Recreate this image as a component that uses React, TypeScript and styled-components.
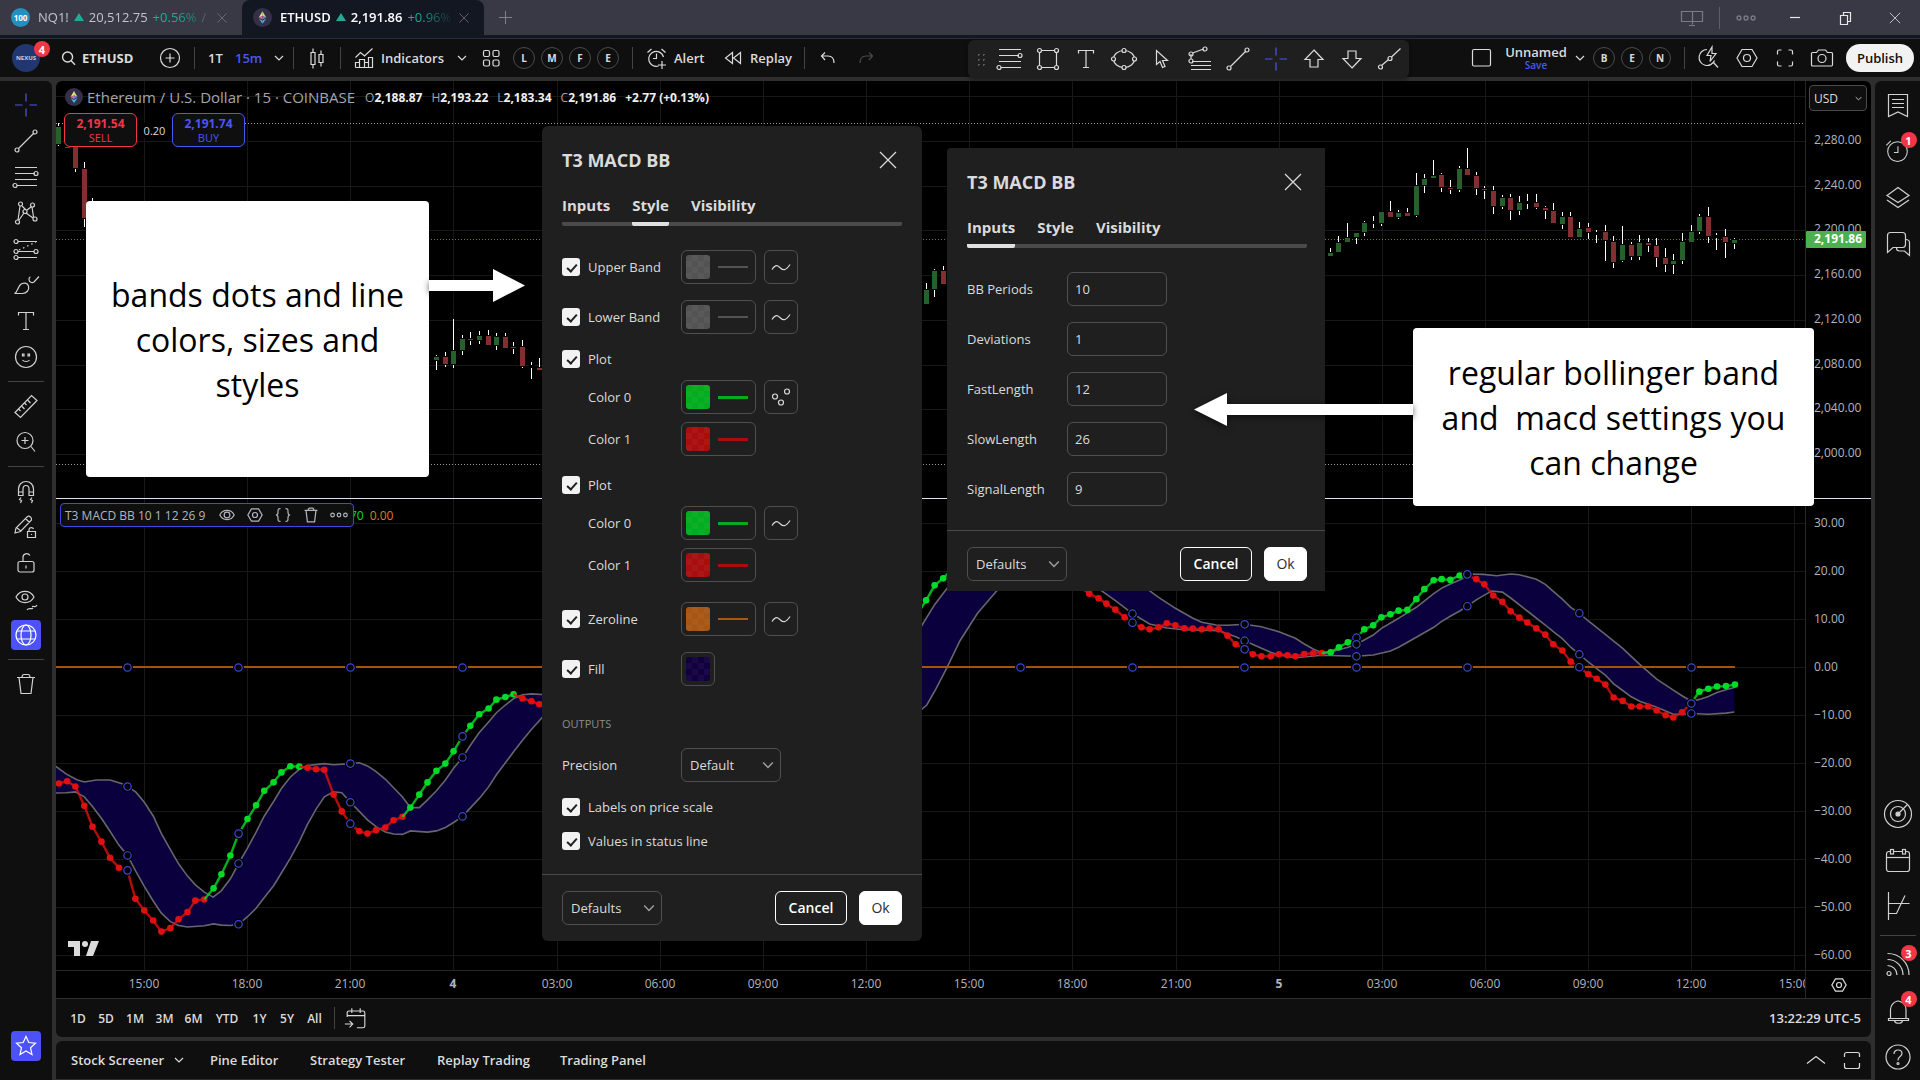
import React from "react";
import styled, { createGlobalStyle, css } from "styled-components";

const Global = createGlobalStyle`
  * { box-sizing: border-box; }
  html, body { margin: 0; padding: 0; background: #2e2e2e; }
  body, button, input, select { font-family: "Open Sans", "Noto Sans", sans-serif; }
  button { background: none; border: 0; padding: 0; margin: 0; color: inherit; cursor: pointer; }
  h2, h3, p { margin: 0; }
`;

/* ---------- icons ---------- */

const ring = (x: number, y: number, r = 2) => <circle key={`${x}-${y}`} cx={x} cy={y} r={r} />;

const ICONS: Record<string, React.ReactNode> = {
  cross: <path d="M14 2.5v8M14 17.5v8M3 14h7.5M17.5 14H25" />,
  trend: <><path d="M6.5 21.5l15-15" />{ring(5, 23)}{ring(23, 5)}</>,
  fib: <><path d="M3 4.5h22M3 10.5h20M3 16.5h22M5 22.5h20" />{ring(24, 10.5)}{ring(3, 22.5)}</>,
  pattern: <><path d="M8 7L6 21M10 7l4 4M20 8l1.5 10M7 21l5-7M14 14l7 5M19 8l-4 3" />{ring(8.5, 5)}{ring(20.5, 6)}{ring(5.5, 23)}{ring(23, 20)}{ring(13, 12.5)}</>,
  forecast: <><path d="M6 6.5h19M6 16.5h16M6 22.5h19" /><path d="M7 15l17-8" strokeDasharray="1.5 3" />{ring(4, 6.5)}{ring(4, 16.5)}{ring(24, 16.5)}{ring(4, 22.5)}</>,
  brush: <><path d="M2.5 22.5c3-1 3-6 6-9 3-2.5 7-1.5 8 1.5 1 4-2 7.5-6 7.5z" /><path d="M27 5.5l-5 5.5c-2 1.5-5 0-5-2.5 0-1.5.5-2.5 1.5-2.5" /></>,
  text: <path d="M6.5 8.5v-3h15v3M14 5.5v17.5M11 22.5h6" />,
  emoji: <><circle cx="14" cy="14" r="10.5" /><path d="M10.5 11h1.5v2h-1.5zM16 11h1.5v2H16z" /><path d="M10.5 17c1.5 2 5.5 2 7 0" /></>,
  ruler: <><path d="M3 20.5L19.5 3.5l5.5 5L8.5 25.5z" /><path d="M6.5 17l2 2M9.5 14l3 3M12.5 11l2 2M15.5 8l3 3" /></>,
  zoom: <><circle cx="13" cy="12.5" r="8" /><path d="M19 18.5l4 5M13 9v7M9.5 12.5h7" /></>,
  magnet: <><path d="M6.5 18.5V12c0-4 3-7.5 7.5-7.5s7.5 3.5 7.5 7.5v6.5h-4.5V12c0-2-1-3.5-3-3.5S11 10 11 12v6.5zM6.5 15H11M17 15h4.5" /><path d="M9 20.5l-1.5 2 2 1-1 2.5M20 20.5l-1.5 2 2 1-1 2.5" /></>,
  pencilLock: <><path d="M3 20l1-5L15.5 3.5c2-1 4.5 1 4 3.5L8.5 18.5zM13.5 5.5l4 4M5 15l4 3" /><path d="M15.5 18.5h8v6h-8zM17 18.5v-2c0-2.5 4-2.5 4.5-.5M19.5 21v1" /></>,
  lock: <><rect x="6" y="12.5" width="16" height="10.5" rx="2" /><path d="M11 12.5V8c0-3.5 5-4.5 7-1.5M14 16.5v3" /></>,
  eyeWave: <><path d="M4 12c4-7.5 14-7.5 18 0-4 7.5-14 7.5-18 0z" /><circle cx="13" cy="12" r="3" /><path d="M15 25c2-3 4 0 6-2M20 21.5c2-1 3 2 5-1.5" /></>,
  globe: <><circle cx="14" cy="14" r="10" /><ellipse cx="14" cy="14" rx="5" ry="10" /><path d="M5 10h18M5 18h18" /></>,
  trash: <path d="M5 7.5h18M10 7.5c0-2.5 1-3 2-3h4c1 0 2 .5 2 3M7 7.5l2 16h10l2-16" />,
  trashBold: <path d="M5 7.5h18M10 7.5c0-2.5 1-3 2-3h4c1 0 2 .5 2 3M7 7.5l2 16h10l2-16" strokeWidth="1.7" />,
  star: <path d="M14 4.5l2.8 6 6.7.7-5 4.5 1.5 6.8-6-3.5-6 3.5 1.5-6.8-5-4.5 6.7-.7z" />,
  watch: <><path d="M4.5 2.5h19v22l-9.5-4.5-9.5 4.5z" /><path d="M8 7.5h12M8 11.5h12M8 15.5h12" /></>,
  alarm: <><circle cx="14" cy="13" r="11" /><path d="M14.5 7v7h-4.5M1.5 6l5-5" /></>,
  layers: <><path d="M3 11.5l11-8 11 8-11 7z" /><path d="M3 16l11 7.5 11-7.5" /></>,
  chat: <><path d="M3.5 22.5V5.500c0-1.5 1-3 3-3h12c2 0 3 1 3 3v9c0 2-1 3-3 3H9z" /><path d="M21.5 9.5c2 0 4 1 4 3v13l-5-4.5h-5c-2 0-3-1-3-3" /></>,
  radar: <><circle cx="14" cy="14" r="13.5" /><circle cx="14" cy="14" r="7.5" /><circle cx="14" cy="14" r="2" fill="currentColor" /><path d="M14 14l9-9" /></>,
  calendar: <><rect x="2.5" y="5.5" width="23" height="20" rx="2.5" /><path d="M2.5 11.5h23" /><rect x="6.5" y="3.5" width="3" height="4.5" fill="#0f0f0f" /><rect x="18.5" y="3.5" width="3" height="4.5" fill="#0f0f0f" /></>,
  dom: <path d="M4.5 0v28M4.5 21.5h8L21 3.5M4.5 11.5h21" />,
  rss: <><path d="M3.5 2.5c12 0 21.5 9 21.5 21.5M3.5 8.5c9 0 15.5 7 15.5 15.500M3.5 14.5c5 0 9.5 4 9.5 9.5" />{ring(5, 22.5)}</>,
  bell: <><path d="M6.5 21.5v-9c0-4 3-7.5 7-8.5h1c4 1 7.5 4 7.5 8.5v9M4.5 21.5h20v2h-20zM10.5 24c1 3 7 3 8 0" /></>,
  help: <><circle cx="14" cy="14" r="12" /><path d="M10 11c0-5.5 8-5 8-.5 0 3-4 3-4 6.500v.5" /><circle cx="14" cy="20.5" r="1" /></>,
  search: <><circle cx="12" cy="12.5" r="7" strokeWidth="2" /><path d="M17 18l5.5 5.5" strokeWidth="2" /></>,
  plus: <><circle cx="14" cy="14" r="9.5" /><path d="M14 9.5v9M9.5 14h9" /></>,
  candles: <path d="M8 8.5h4v12H8zM10 4.5v4M10 20.5v4M16 10.5h4v8h-4zM18 6.5v4M18 18.5v4" />,
  indicators: <path d="M5.5 13.5l5-5 4 3.5 8-7.5M5.5 23.5v-5h4v5M9.5 23.5v-8h5v8M14.5 23.5v-5h4v5M18.5 23.5v-10h4v10zM5.5 23.5h17" />,
  grid: <><rect x="6.5" y="6.5" width="6" height="6" rx="1.5" /><rect x="16" y="6.5" width="6" height="6" rx="1.5" /><rect x="6.5" y="16" width="6" height="6" rx="1.5" /><rect x="16" y="16" width="6" height="6" rx="1.5" /></>,
  alert: <><path d="M20.5 13a7.5 7.5 0 1 0-5 9M13.5 9.5v5H10M4.5 8.5l4-3.5M18.5 5l4 3.5M19 17v8M15 21h8" /></>,
  replay: <path d="M13.5 8.5v11L6.5 14zM21.5 8.5v11L14.5 14z" />,
  undo: <path d="M11 8.5l-3.5 3.5 3.5 4M8 12h6c4 0 6 2.5 6 7" />,
  redo: <path d="M17 8.5l3.5 3.5-3.5 4M20 12h-6c-4 0-6 2.5-6 7" />,
  square: <rect x="5.5" y="5.5" width="18" height="16.5" rx="1.5" />,
  quick: <><path d="M12 5.5a8 8 0 1 0 7.5 11M18.5 18.5l4.5 5" /><path d="M17 3l-5 8.5h4l-1 6 6-8h-4z" /></>,
  hex: <><path d="M9 5.5h10l5 8.5-5 8.5H9L4 14z" /><circle cx="14" cy="14" r="3.5" /></>,
  full: <path d="M6.5 10.5v-3c0-1 .5-1.5 1.5-1.5h2.5M17.5 6H20c1 0 1.5.5 1.5 1.5v3M21.5 17.5v3c0 1-.5 1.5-1.5 1.5h-2.5M10.5 22H8c-1 0-1.5-.5-1.5-1.5v-3" />,
  camera: <><path d="M4.5 8.5h4l2-2.500h7l2 2.5h4c.8 0 1 .3 1 1v11c0 1-.2 1.5-1 1.5h-19c-.8 0-1-.5-1-1.5v-11c0-.7.2-1 1-1z" /><circle cx="14" cy="14.5" r="4" /></>,
  rect: <><path d="M8 5.5h12M8 22.5h12M5.5 8v12M22.5 8v12" />{ring(5.5, 5.5)}{ring(22.5, 5.5)}{ring(5.5, 22.5)}{ring(22.5, 22.5)}</>,
  ellipse: <><ellipse cx="14" cy="14" rx="10.5" ry="8.5" />{[[14, 5.5], [14, 22.5], [3.5, 14], [24.5, 14]].map(([x, y]) => <circle key={`${x}${y}`} cx={x} cy={y} r="2" fill="#1f1f1f" />)}</>,
  cursor: <path d="M8.5 5.5v14l3.5-3 2.5 6 2.5-1-2.5-6h5z" />,
  fork: <><path d="M5 14v-5M6.5 8l11-4M6 16.5h19M5 20.5h20M5 24.5h20" />{ring(5, 9)}{ring(19, 4)}{ring(5, 16)}</>,
  up: <path d="M14 5l9 9.5h-5V22h-8v-7.5H5z" />,
  down: <path d="M14 23l9-9.5h-5V6h-8v7.5H5z" />,
  ray: <><path d="M5.5 20.5L12 15M15.500 12l9-8.5" />{ring(4.5, 22)}{ring(14, 13.5)}</>,
  wave: <path d="M5 16.5c4-6 6-4 8.5-1.5s5 3 9.5-3.5" />,
  dots: <>{ring(8, 13.5, 2.5)}{ring(20, 8.5, 2.5)}{ring(14, 19.5, 2.5)}</>,
  close: <path d="M6 6l16 16M22 6L6 22" />,
  eye: <><path d="M4 14c4-8.5 16-8.5 20 0-4 8.5-16 8.5-20 0z" strokeWidth="1.7" /><circle cx="14" cy="14" r="4" strokeWidth="1.7" /></>,
  hexSmall: <><path d="M9 5.5h10l5 8.5-5 8.5H9L4 14z" strokeWidth="1.7" /><circle cx="14" cy="14" r="3.5" strokeWidth="1.7" /></>,
  braces: <path d="M10.5 5c-3.5 0-3.5 1-3.5 5 0 3-1 4-3 4 2 0 3 1 3 4 0 4 0 5 3.5 5M17.5 5c3.5 0 3.5 1 3.5 5 0 3 1 4 3 4-2 0-3 1-3 4 0 4 0 5-3.5 5" strokeWidth="1.7" />,
  more: <g strokeWidth="1.7">{ring(5, 14, 2.5)}{ring(14, 14, 2.5)}{ring(23, 14, 2.5)}</g>,
  goTo: <path d="M4.5 13V8.5c0-1 .5-2 2-2h15c1.5 0 2 1 2 2v14c0 1-.5 2-2 2H15M9.5 3.5v5M18.5 3.5v5M4.5 11.5h19M2 20.5h8M7 17l3.5 3.5L7 24" />,
  chevUp: <path d="M5 17.5l9-7 9 7" />,
  panel: <path d="M6.5 11V8.5c0-1 1-2 2-2h11c1 0 2 1 2 2V11M6.5 17v3.5c0 1 1 2 2 2h11c1 0 2-1 2-2V17" />,
  screens: <path d="M3.5 7.5h21v10h-21zM14.5 7.5v13M11 21.5h6" />,
  restore: <path d="M9.5 11.5h7v9h-7zM12.5 11V8.5h7v9H17" />,
  min: <path d="M9 13.5h10" />,
};

const Svg = styled.svg`display: block; flex: none;`;

const Icon = ({ n, size = 28 }: { n: string; size?: number }) => (
  <Svg width={size} height={size} viewBox="0 0 28 28" fill="none" stroke="currentColor" strokeWidth="1.2" aria-hidden overflow="visible">
    {ICONS[n]}
  </Svg>
);

const Chevron = ({ size = 10 }: { size?: number }) => (
  <Svg width={size} height={size} viewBox="0 0 10 10" fill="none" stroke="currentColor" strokeWidth="1.2" aria-hidden>
    <path d="M1 3l4 4 4-4" />
  </Svg>
);

const EthLogo = ({ size = 18 }: { size?: number }) => (
  <Svg width={size} height={size} viewBox="0 0 18 18" aria-hidden>
    <circle cx="9" cy="9" r="9" fill="#343047" />
    <path d="M9 3L5.5 9 9 7.5z" fill="#f3e06a" />
    <path d="M9 3l3.5 6L9 7.5z" fill="#b8e08a" />
    <path d="M9 7.5L5.5 9 9 11z" fill="#e8658c" />
    <path d="M9 7.5L12.5 9 9 11z" fill="#7a6fe0" />
    <path d="M5.500 10L9 12v3z" fill="#5aa8f1" />
    <path d="M12.5 10L9 12v3z" fill="#39c8e0" />
  </Svg>
);

/* ---------- frame ---------- */

const Page = styled.div`
  position: relative;
  min-height: 100vh;
  display: flex;
  flex-direction: column;
  overflow: hidden;
  background: #2e2e2e;
  color: #dbdbdb;
  font-size: 13px;
`;

const Titlebar = styled.header`
  display: flex;
  align-items: stretch;
  height: 39px;
  background: #383945;
  border-bottom: 1px solid #2a2e39;
  box-shadow: inset 0 -3px #131722;
`;

const Tab = styled.div<{ $active?: boolean }>`
  display: flex;
  align-items: center;
  width: 242px;
  height: 35px;
  padding: 0 12px 0 11px;
  white-space: nowrap;
  color: ${(p) => (p.$active ? "#fff" : "#c1c4cd")};
  font-weight: ${(p) => (p.$active ? 600 : 500)};
  background: ${(p) => (p.$active ? "#131722" : "transparent")};
  border-radius: 8px 8px 0 0;
  > button { margin-left: auto; color: #7d7f8a; }
`;

const Coin = styled.span`
  display: grid;
  place-items: center;
  flex: none;
  width: 19px;
  height: 19px;
  border-radius: 50%;
  background: #2390c0;
  color: #fff;
  font-size: 8px;
  font-weight: 700;
`;

const Quote = styled.div`
  display: flex;
  align-items: center;
  gap: 5px;
  width: 172px;
  height: 34px;
  padding-bottom: 1px;
  margin-left: 8px;
  overflow: hidden;
  mask-image: linear-gradient(90deg, #000 80%, transparent 102%);
`;

const Up = styled.span`
  color: #22ab94;
  font-weight: 500;
`;

const Triangle = styled.i`
  border: 5px solid transparent;
  border-top: 0;
  border-bottom: 8px solid #22ab94;
`;

const NewTab = styled.button`
  width: 42px;
  height: 35px;
  display: grid;
  place-items: center;
  color: #7d7f8a;
`;

const WindowButtons = styled.div`
  display: flex;
  align-items: center;
  height: 36px;
  margin-left: auto;
  color: #dbdbdb;
`;

const WinButton = styled.button<{ $w: number; $mr?: number; $dim?: boolean }>`
  display: grid;
  place-items: center;
  width: ${(p) => p.$w}px;
  height: 28px;
  margin-right: ${(p) => p.$mr ?? 0}px;
  color: ${(p) => (p.$dim ? "#787a85" : "#e8e8ea")};
`;

const Divider = styled.i<{ $ml?: number; $mr?: number; $c?: string }>`
  flex: none;
  width: 1px;
  height: 22px;
  margin: 0 ${(p) => p.$mr ?? 0}px 0 ${(p) => p.$ml ?? 0}px;
  background: ${(p) => p.$c ?? "#434343"};
`;

const Toolbar = styled.div`
  display: flex;
  align-items: center;
  height: 38px;
  padding: 0 6px 0 12px;
  background: #0f0f0f;
`;

const Tool = styled.button<{ $w: number; $ml?: number; $blue?: boolean; $dim?: boolean; $bold?: boolean }>`
  display: flex;
  align-items: center;
  flex: none;
  gap: 3px;
  width: ${(p) => p.$w}px;
  height: 32px;
  margin-left: ${(p) => p.$ml ?? 0}px;
  white-space: nowrap;
  font-size: 13px;
  font-weight: ${(p) => (p.$bold ? 700 : 600)};
  color: ${(p) => (p.$blue ? "#4c55f5" : p.$dim ? "#4a4a4a" : "#dbdbdb")};
`;

const Avatar = styled.button`
  position: relative;
  width: 28px;
  height: 28px;
  border-radius: 50%;
  background: #22376f;
  color: #c9cfdd;
  font-size: 6px;
  font-weight: 700;
`;

const Badge = styled.span<{ $top: number; $right: number }>`
  position: absolute;
  top: ${(p) => p.$top}px;
  right: ${(p) => p.$right}px;
  display: grid;
  place-items: center;
  width: 16px;
  height: 16px;
  border-radius: 8px;
  background: #f23645;
  color: #fff;
  font-size: 11px;
  font-weight: 700;
`;

const Letter = styled.button<{ $ml?: number }>`
  flex: none;
  width: 22px;
  height: 22px;
  margin-left: ${(p) => p.$ml ?? 6}px;
  border: 1px solid #4a4a4a;
  border-radius: 50%;
  font-size: 10px;
  font-weight: 700;
`;

const RightTools = styled.div`
  display: flex;
  align-items: center;
  margin-left: auto;
`;

const LayoutName = styled.button`
  display: flex;
  flex-direction: column;
  align-items: center;
  width: 60px;
  margin: 0 9px 0 11px;
  font-size: 13px;
  font-weight: 600;
  line-height: 15px;
  small { font-size: 10px; line-height: 11px; color: #4c55f5; }
`;

const Publish = styled.button`
  width: 68px;
  height: 28px;
  margin-left: 10px;
  border-radius: 14px;
  background: #f2f2f2;
  color: #0f0f0f;
  font-size: 13px;
  font-weight: 600;
`;

const FloatingBar = styled.div`
  position: absolute;
  top: 40px;
  left: 968px;
  z-index: 3;
  display: flex;
  align-items: center;
  gap: 10px;
  width: 441px;
  height: 38px;
  padding-left: 8px;
  border-radius: 6px;
  background: #1f1f1f;
  box-shadow: 0 2px 4px rgba(0, 0, 0, 0.4);
`;

const Grip = styled.span`
  width: 10px;
  height: 15px;
  background: radial-gradient(circle, #5c5c5c 1px, transparent 1px) 0 0 / 5px 5px;
`;

const FloatButton = styled.button<{ $blue?: boolean }>`
  color: ${(p) => (p.$blue ? "#4c55f5" : "#dbdbdb")};
`;

const Body = styled.div`
  flex: 1;
  display: flex;
  gap: 4px;
  padding-top: 4px;
`;

const Side = styled.nav<{ $right?: boolean }>`
  display: flex;
  flex-direction: column;
  align-items: center;
  width: ${(p) => (p.$right ? 45 : 52)}px;
  padding: ${(p) => (p.$right ? "2px 0 0" : "6px 0 16px")};
  border-radius: ${(p) => (p.$right ? "6px 0 0 0" : "0 6px 0 0")};
  background: #0f0f0f;
`;

const SideButton = styled.button<{ $h: number; $blue?: boolean }>`
  position: relative;
  display: grid;
  place-items: center;
  width: 36px;
  height: ${(p) => p.$h}px;
  color: ${(p) => (p.$blue ? "#4c55f5" : "#d1d1d1")};
`;

const BlueButton = styled.button`
  display: grid;
  place-items: center;
  width: 30px;
  height: 30px;
  margin: 3px 0;
  border-radius: 4px;
  background: #4c52f7;
  color: #fff;
`;

const Rule = styled.i`
  width: 36px;
  height: 1px;
  margin: 6px 0;
  background: #434343;
`;

const Spacer = styled.span`flex: 1;`;

const Main = styled.main`
  flex: 1;
  min-width: 0;
  display: flex;
  flex-direction: column;
`;

const ChartFrame = styled.section`
  flex: 1;
  display: grid;
  grid-template-columns: 1fr 66px;
  grid-template-rows: 1fr 28px;
  border-radius: 6px 6px 0 0;
  overflow: hidden;
  background: #000;
`;

const Plot = styled.div`
  position: relative;
  overflow: hidden;
  > svg { position: absolute; inset: 0; }
`;

const PriceScale = styled.div`
  position: relative;
  padding: 4px 4px 0 3px;
  border-left: 1px solid #262626;
  > svg { position: absolute; left: 0; top: 0; }
`;

const TimeScale = styled.div`
  overflow: hidden;
  border-top: 1px solid #262626;
`;

const ScaleCorner = styled.button`
  display: grid;
  place-items: center;
  border-top: 1px solid #262626;
  border-left: 1px solid #262626;
`;

const Currency = styled.span`
  position: relative;
  z-index: 1;
  display: flex;
  align-items: center;
  height: 26px;
  select {
    appearance: none;
    width: 100%;
    height: 26px;
    padding: 0 4px;
    border: 1px solid #4a4a4a;
    border-radius: 4px;
    background: #0f0f0f;
    color: #dbdbdb;
    font-size: 12px;
    font-weight: 500;
  }
  svg { position: absolute; right: 5px; }
`;

const AxisText = styled.text<{ $strong?: boolean; $tag?: boolean }>`
  font-family: "Open Sans", "Noto Sans", sans-serif;
  font-size: 12px;
  fill: ${(p) => (p.$tag ? "#fff" : "#b2b5be")};
  font-weight: ${(p) => (p.$strong || p.$tag ? 700 : 500)};
`;

const Legend = styled.div`
  position: relative;
  display: flex;
  align-items: center;
  height: 24px;
  padding-left: 9px;
  margin-top: 4px;
  gap: 4px;
  color: #a3a6af;
`;

const SymbolName = styled.h2`
  margin-right: 6px;
  font-size: 15px;
  font-weight: 500;
  white-space: pre;
`;

const Ohlc = styled.span`
  margin-right: 5px;
  font-size: 12px;
  b { color: #f0f0f0; font-weight: 700; }
`;

const Orders = styled.div`
  position: relative;
  display: flex;
  align-items: center;
  height: 34px;
  margin-top: 4px;
  padding-left: 8px;
`;

const OrderButton = styled.button<{ $c: string }>`
  display: flex;
  flex-direction: column;
  align-items: center;
  justify-content: center;
  width: 73px;
  height: 34px;
  border: 1px solid ${(p) => p.$c};
  border-radius: 6px;
  background: #0f0f0f;
  color: ${(p) => p.$c};
  font-size: 12px;
  font-weight: 700;
  line-height: 14px;
  small { font-size: 11px; font-weight: 400; line-height: 13px; }
`;

const Spread = styled.span`
  width: 35px;
  text-align: center;
  font-size: 11px;
  font-weight: 500;
  background: #000;
`;

const StudyRow = styled.div`
  position: absolute;
  top: 422px;
  left: 4px;
  display: flex;
  align-items: center;
  height: 24px;
  font-size: 12px;
  font-weight: 500;
`;

const Study = styled.div`
  position: relative;
  z-index: 1;
  display: flex;
  align-items: center;
  gap: 8px;
  width: 294px;
  height: 24px;
  padding-left: 4px;
  border: 1px solid #4148e0;
  border-radius: 4px;
  background: #0f0f0f;
  color: #b2b5be;
  font-size: 12px;
  white-space: nowrap;
  > span { width: 144px; }
`;

const Value = styled.span<{ $c: string; $ml: number }>`
  margin-left: ${(p) => p.$ml}px;
  color: ${(p) => p.$c};
`;

const RangeBar = styled.div`
  display: flex;
  align-items: center;
  height: 39px;
  padding: 0 10px 0 8px;
  border-top: 1px solid #2e2e2e;
  border-radius: 0 0 6px 6px;
  background: #0f0f0f;
`;

const Range = styled.button<{ $w: number }>`
  width: ${(p) => p.$w}px;
  height: 28px;
  font-size: 12px;
  font-weight: 600;
`;

const Clock = styled.time`
  margin-left: auto;
  font-size: 13px;
  font-weight: 600;
`;

const BottomTabs = styled.div`
  display: flex;
  align-items: center;
  height: 38px;
  margin: 4px 0 1px;
  padding: 0 5px 0 15px;
  border-radius: 6px 6px 0 0;
  background: #0f0f0f;
`;

const BottomTab = styled.button<{ $w: number }>`
  display: flex;
  align-items: center;
  gap: 10px;
  width: ${(p) => p.$w}px;
  font-size: 13px;
  font-weight: 600;
  white-space: nowrap;
`;

/* ---------- dialogs ---------- */

const Dialog = styled.section<{ $x: number; $y: number; $w: number; $end: number; $foot: number; $r: string }>`
  position: absolute;
  z-index: 2;
  left: ${(p) => p.$x}px;
  top: ${(p) => p.$y}px;
  width: ${(p) => p.$w}px;
  border-radius: ${(p) => p.$r};
  background: #1f1f1f;
  --end: ${(p) => p.$end}px;
  --foot: ${(p) => p.$foot}px;
`;

const DialogHead = styled.div`
  display: flex;
  align-items: center;
  justify-content: space-between;
  height: 48px;
  padding: 20px var(--end) 0 20px;
  h3 { font-size: 18px; font-weight: 700; line-height: 28px; }
  button { display: grid; place-items: center; width: 28px; height: 28px; }
`;

const Tabs = styled.div`
  display: flex;
  gap: 22px;
  height: 32px;
  margin: 20px var(--end) 24px 20px;
  border-radius: 2px;
  background: linear-gradient(#4a4a4a, #4a4a4a) 0 100% / 100% 4px no-repeat;
`;

const DialogTab = styled.button<{ $on?: boolean }>`
  height: 32px;
  padding-bottom: 10px;
  font-size: 15px;
  font-weight: 700;
  line-height: 22px;
  ${(p) => p.$on && css`background: linear-gradient(#e0e0e0, #e0e0e0) 0 100% / 100% 4px no-repeat; border-radius: 2px;`}
`;

const Form = styled.div`
  padding: 0 20px 24px;
`;

const Row = styled.div<{ $gap?: number; $h?: number; $col?: number }>`
  display: grid;
  grid-template-columns: ${(p) => p.$col ?? 119}px auto auto;
  justify-content: start;
  align-items: center;
  height: ${(p) => p.$h ?? 34}px;
  margin-top: ${(p) => p.$gap ?? 0}px;
  font-size: 13px;
  font-weight: 500;
`;

const Check = styled.label`
  display: flex;
  align-items: center;
  gap: 8px;
  white-space: nowrap;
  input {
    appearance: none;
    position: relative;
    flex: none;
    width: 18px;
    height: 18px;
    margin: 0;
    border-radius: 3px;
    background: #f2f2f2;
  }
  input::after {
    content: "";
    position: absolute;
    left: 7px;
    top: 4px;
    width: 4px;
    height: 8px;
    border: solid #1f1f1f;
    border-width: 0 2px 2px 0;
    rotate: 42deg;
  }
`;

const Indented = styled.span`padding-left: 26px;`;

const ColorButton = styled.button<{ $w: number }>`
  display: flex;
  align-items: center;
  gap: 8px;
  width: ${(p) => p.$w}px;
  height: 34px;
  padding: 0 4px;
  border: 1px solid #4f4f4f;
  border-radius: 6px;
`;

const Swatch = styled.i<{ $c: string }>`
  width: 24px;
  height: 24px;
  border-radius: 3px;
  background: repeating-conic-gradient(rgba(255, 255, 255, 0.035) 0 25%, transparent 0 50%) 0 0 / 12px 12px, ${(p) => p.$c};
`;

const Stroke = styled.i<{ $c: string; $h: number }>`
  width: 30px;
  height: ${(p) => p.$h}px;
  background: ${(p) => p.$c};
`;

const StyleButton = styled.button`
  display: grid;
  place-items: center;
  width: 34px;
  height: 34px;
  margin-left: 8px;
  border: 1px solid #4f4f4f;
  border-radius: 6px;
`;

const Section = styled.p`
  margin-top: 30px;
  font-size: 11px;
  line-height: 16px;
  color: #8c8c8c;
`;

const Select = styled.span`
  position: relative;
  display: flex;
  align-items: center;
  width: 100px;
  select {
    appearance: none;
    width: 100px;
    height: 34px;
    padding: 0 8px;
    border: 1px solid #4f4f4f;
    border-radius: 6px;
    background: #1f1f1f;
    color: #dbdbdb;
    font-size: 13px;
    font-weight: 500;
  }
  svg { position: absolute; right: 7px; color: #a0a0a0; }
`;

const NumberBox = styled.input`
  width: 100px;
  height: 34px;
  padding: 0 7px;
  border: 1px solid #4f4f4f;
  border-radius: 6px;
  background: #1f1f1f;
  color: #dbdbdb;
  font-size: 13px;
  font-weight: 500;
`;

const Footer = styled.div`
  display: flex;
  align-items: center;
  gap: 12px;
  padding: 16px var(--end) var(--foot) 20px;
  border-top: 1px solid #4a4a4a;
`;

const Button = styled.button<{ $solid?: boolean }>`
  width: ${(p) => (p.$solid ? 43 : 72)}px;
  height: 34px;
  padding-bottom: 2px;
  border: 1px solid #fff;
  border-radius: 6px;
  background: ${(p) => (p.$solid ? "#fff" : "transparent")};
  color: ${(p) => (p.$solid ? "#2e2e2e" : "#fff")};
  font-size: 14px;
  font-weight: ${(p) => (p.$solid ? 400 : 600)};
`;

const Callout = styled.aside<{ $x: number; $y: number; $w: number; $h: number }>`
  position: absolute;
  z-index: 4;
  left: ${(p) => p.$x}px;
  top: ${(p) => p.$y}px;
  display: grid;
  place-items: center;
  width: ${(p) => p.$w}px;
  height: ${(p) => p.$h}px;
  border-radius: 4px;
  background: #fff;
  color: #000;
  text-align: center;
  font-size: 32px;
  line-height: 45px;
  p { white-space: pre; }
`;

const Arrow = styled.svg<{ $left?: boolean; $top: number }>`
  position: absolute;
  top: ${(p) => p.$top}px;
  ${(p) => (p.$left ? "right" : "left")}: 100%;
  filter: drop-shadow(0 2px 3px rgba(0, 0, 0, 0.6));
`;

/* ---------- chart data ---------- */

type Pt = [number, number];

const seg = (ox: number, oy: number, sx: number, sy: number, s: string): Pt[] =>
  s.split(" ").map((p) => {
    const [x, y] = p.split(",").map(Number);
    return [ox + x / sx, oy + y / sy];
  });

const A = (s: string) => seg(0, 480, 2.8, 2.613, s);
const B = (s: string) => seg(900, 480, 2.8, 3, s);
const C = (s: string) => seg(1400, 500, 3, 2.703, s);

const RED = "#e01010";
const GREEN = "#00dc28";

const runs: { c: string; pts: Pt[] }[] = [
  { c: RED, pts: A("140,797 165,793 188,787 211,801 236,851 259,906 284,945 308,987 333,1013 357,1020 379,1094 404,1125 429,1151 452,1180 477,1171 500,1148 525,1129 547,1099 572,1096") },
  { c: GREEN, pts: A("572,1096 598,1067 620,1030 645,981 668,924 693,886 717,850 740,812 766,790 788,764 813,748 838,749") },
  { c: RED, pts: A("838,749 861,752 885,756 908,757 934,822 957,866 981,898 1006,918 1029,924 1053,915 1079,908 1102,889 1127,880") },
  { c: GREEN, pts: A("1127,880 1149,856 1174,822 1197,790 1222,760 1247,741 1270,709 1295,670 1317,642 1342,612 1368,597 1390,574 1415,567 1438,560") },
  { c: RED, pts: A("1438,560 1463,571 1488,578 1510,586 1535,600") },
  { c: GREEN, pts: B("50,400 73,361 97,316 121,295 145,268 170,250") },
  { c: RED, pts: B("480,300 505,322 530,341 556,355 578,371 603,389 629,412 651,428 676,442 699,448 724,442 747,430 771,436 796,445 820,446 845,448 867,445 892,448 917,467 940,493 965,508 988,523 1012,529 1038,529 1061,523 1085,526 1107,529 1132,522 1157,520 1181,519") },
  { c: GREEN, pts: [...B("1181,519 1206,517 1229,502 1254,487 1278,473 1300,448 1325,436 1348,412 1373,403 1396,392"), ...C("22,297 49,268 73,241 101,217 125,214 151,216 179,204 202,203")] },
  { c: RED, pts: C("202,203 229,214 253,228 280,258 307,275 332,301 358,318 382,331 409,347 436,364 460,390 487,407 512,437 538,452 565,471 590,483 616,499 641,534 668,543 694,558 719,558 744,558 770,569 797,582 820,588 846,574 874,549") },
  { c: GREEN, pts: C("874,549 898,518 925,510 951,504 978,503 1005,499") },
];

const bands: { up: Pt[]; low: Pt[] }[] = [
  {
    up: A("150,744 185,768 215,783 236,789 270,784 308,784 340,793 357,801 380,815 404,842 429,878 452,924 477,966 500,1003 525,1035 547,1058 572,1077 597,1090 620,1073 645,1042 668,1002 693,962 717,920 740,878 766,840 788,806 813,776 838,756 861,746 908,741 934,744 981,741 1006,739 1029,747 1053,762 1079,782 1102,804 1127,828 1149,856 1174,856 1197,836 1222,812 1247,784 1270,753 1295,725 1317,693 1342,660 1368,632 1390,608 1415,588 1438,571 1463,561 1488,559 1530,561"),
    low: A("150,818 185,817 211,815 236,828 259,853 284,884 308,918 333,954 357,981 380,1022 404,1062 429,1100 452,1132 477,1154 500,1164 525,1168 572,1165 598,1160 620,1163 645,1164 668,1161 693,1141 717,1119 740,1091 766,1060 788,1027 813,988 838,945 861,900 885,860 908,828 934,815 957,817 981,842 1006,866 1029,888 1053,906 1079,920 1102,925 1127,926 1149,917 1197,920 1222,917 1247,908 1270,895 1295,879 1342,832 1368,802 1390,770 1415,739 1438,710 1463,680 1488,652 1530,608"),
  },
  {
    up: B("40,475 62,435 97,374 132,325 160,290"),
    low: B("40,712 62,687 75,675 100,628 132,562 168,482 217,400 270,334 310,290"),
  },
  {
    up: [...B("650,293 690,325 724,352 771,385 820,415 845,427 885,435 917,436 965,433 1012,440 1061,455 1107,475 1132,492 1157,507 1181,518 1206,516 1254,502 1278,493 1325,465 1348,445 1396,415"), ...C("0,317 49,290 101,253 125,238 151,227 179,216 215,200 250,201 290,205 332,200 358,202 409,214 436,228 460,247 487,268 512,290 538,306 565,327 616,363 668,401 719,444 770,484 820,514 846,529 874,544 898,539 925,531 951,520 978,513 1003,507")],
    low: [...B("500,285 555,325 603,362 651,401 699,432 747,444 796,449 892,452 940,470 965,482 1012,505 1038,517 1061,525 1107,533 1181,526 1254,528 1278,529 1325,525 1373,513 1396,502"), ...C("0,396 49,371 101,344 125,328 151,314 179,300 202,287 229,270 253,257 275,246 307,249 332,265 382,300 436,338 460,356 487,375 512,398 538,417 565,438 590,456 616,473 641,497 668,515 694,532 719,544 770,560 820,579 846,579 874,577 925,579 978,576 1003,573")],
  },
];

const handles: Pt[] = [
  ...A("357,801 357,981 357,1020 668,924 668,1002 668,1161 981,741 981,842 981,898 1295,670 1295,725 1295,879"),
  ...B("651,401 651,428 965,433 965,482 965,508 1278,473 1278,493 1278,529"),
  ...C("202,201 202,287 538,306 538,417 538,452 874,550 874,577"),
  ...[127.5, 238.5, 350.5, 462.5, 1020.5, 1132.5, 1244.5, 1356.5, 1467.5, 1691.5].map((x): Pt => [x, 667.5]),
];

/* x, body top, body bottom, wick top, wick bottom, colour (g rise, r fall, d flat) */
const candles = (
  "58,127,144,123,146,g 67,147,148,147,149,r 75,147,168,147,172,r 84,169,218,162,227,r 92,218,240,198,250,r " +
  "436,357,360,355,370,g 445,357,364,352,367,r 453,351,364,319,368,g 462,339,350,335,355,g 470,339,340,332,345,r 479,336,340,331,344,g 488,336,345,330,345,r 496,337,345,333,350,g 505,337,348,333,348,r 513,347,348,342,354,g 522,347,366,340,368,r 531,366,367,362,379,d 539,368,370,358,370,r " +
  "926,290,304,283,305,g 934,271,289,269,297,g 943,271,284,266,284,r " +
  "1330,253,256,248,257,g 1338,243,252,236,252,g 1347,238,242,223,242,g 1356,233,237,233,244,g 1364,223,232,221,236,g 1373,222,223,216,228,d 1381,212,223,212,226,g 1390,212,217,201,217,r 1398,213,217,210,219,g 1407,213,216,208,216,r 1416,186,215,173,217,g 1424,179,185,174,193,g 1433,176,178,160,178,g 1441,175,187,173,192,r 1450,188,189,180,194,r 1459,169,189,166,192,g 1467,169,175,148,175,r 1476,176,188,172,195,r 1484,189,190,186,199,r 1493,191,206,186,214,r 1502,198,206,195,209,g 1510,198,210,194,220,r 1519,203,210,196,215,g 1527,202,203,194,209,d 1536,203,207,194,209,r 1545,208,210,206,219,r 1553,211,223,203,223,r 1562,217,224,212,229,g 1570,217,237,212,237,r 1579,229,237,222,237,g 1588,228,232,223,239,r 1596,233,234,230,243,d 1605,232,240,225,261,r 1613,242,262,236,268,r 1622,245,260,226,262,g 1631,245,256,242,260,r 1639,243,256,235,260,g 1648,243,245,238,252,r 1656,246,257,238,267,r 1665,258,264,248,272,r 1673,261,264,254,274,g 1682,242,260,233,264,g 1691,232,242,225,242,g 1699,217,231,214,234,g 1708,217,236,207,243,r 1716,236,237,233,250,d 1725,237,242,229,258,r 1734,240,243,238,249,g"
).split(" ").map((c) => {
  const p = c.split(",");
  return { x: +p[0], t: +p[1], b: +p[2], wt: +p[3], wb: +p[4], k: p[5] };
});

const fills: Record<string, string> = { g: "#26602b", r: "#832e30", d: "#000" };
const hours = ["15:00", "18:00", "21:00", "4", "03:00", "06:00", "09:00", "12:00", "15:00", "18:00", "21:00", "5", "03:00", "06:00", "09:00", "12:00", "15:00"];
const hourX = (i: number) => Math.round(144 + i * 103.15);
const prices = [2280, 2240, 2200, 2160, 2120, 2080, 2040, 2000].map((v, i) => ({ t: `${v.toLocaleString("en-US")}.00`, y: Math.round(140 + i * 44.7) }));
const levels = [30, 20, 10, 0, -10, -20, -30, -40, -50, -60].map((v, i) => ({ t: `${v < 0 ? "−" : ""}${Math.abs(v)}.00`, y: Math.round(522.5 + i * 48.1) }));
const path = (pts: Pt[]) => pts.map(([x, y], i) => `${i ? "L" : "M"}${x.toFixed(1)} ${y.toFixed(1)}`).join("");

const Chart = () => (
  <svg width="100%" height="100%" role="img" aria-label="Price and MACD chart">
    <g transform="translate(-56 -81)">
      <g stroke="#181818" strokeWidth="1">
        {hours.map((_, i) => <path key={i} d={`M${hourX(i)}.5 81V970`} />)}
        {[96, ...prices.map((p) => p.y + 1), ...levels.map((l) => l.y)].map((y) => <path key={y} d={`M56 ${y}.5H1806`} />)}
      </g>
      <path d="M56 123.5H1805M56 464.5H1805" stroke="#9a9a9a" strokeDasharray="1 2" />
      <path d="M56 239.5H1805" stroke="#3f8f45" strokeDasharray="1 2" />
      {candles.map((c) => (
        <g key={c.x}>
          <path d={`M${c.x + 0.5} ${c.wt}V${c.wb}`} stroke="#fff" strokeWidth="1" />
          <rect x={c.x - 2.5} y={c.t - 1} width="6" height={c.b - c.t + 2} fill="#000" />
          <rect x={c.x - 2} y={c.t} width="5" height={c.b - c.t} fill={fills[c.k]} />
        </g>
      ))}
      <path d="M56 498.5H1806" stroke="#e0e3eb" />
      {bands.map((b, i) => (
        <g key={i}>
          <path d={`${path(b.up)}${path([...b.low].reverse()).replace("M", "L")}Z`} fill="#0b003e" />
          <path d={path(b.up)} fill="none" stroke="#66666c" strokeWidth="1.6" />
          <path d={path(b.low)} fill="none" stroke="#66666c" strokeWidth="1.6" />
        </g>
      ))}
      <path d="M56 667H1735" stroke="#a0540f" strokeWidth="2" />
      {runs.map((r, i) => (
        <g key={i}>
          <path d={path(r.pts)} fill="none" stroke={r.c} strokeOpacity=".8" strokeWidth="2.4" />
          {r.pts.slice(1).map(([x, y]) => <circle key={x} cx={x} cy={y} r="3.3" fill={r.c} />)}
        </g>
      ))}
      {handles.map(([x, y], i) => (
        <g key={i}>
          <circle cx={x} cy={y} r="5.5" fill="#000" />
          <circle cx={x} cy={y} r="3.7" fill="#000" stroke="#3d48d6" strokeWidth="1.2" />
        </g>
      ))}
      <path d="M68 941h12v15h-6v-9h-6zM91 941h8l-6 15h-7z" fill="#dbdbdb" />
      <circle cx="85" cy="944" r="3" fill="#dbdbdb" />
    </g>
  </svg>
);

const FieldStyle = ({ c, thick, icon, only, label }: { c: string; thick?: boolean; icon?: string; only?: boolean; label: string }) => (
  <>
    <ColorButton $w={only ? 34 : 75} aria-label={`${label} color`}>
      <Swatch $c={c} />
      {!only && <Stroke $c={c} $h={thick ? 3 : 2} />}
    </ColorButton>
    {icon && <StyleButton aria-label={`${label} line style`}><Icon n={icon} /></StyleButton>}
  </>
);

const Tick = ({ children }: { children: string }) => (
  <Check><input type="checkbox" defaultChecked />{children}</Check>
);

const Pick = ({ label, children }: { label: string; children: string }) => (
  <Select>
    <select aria-label={label}><option>{children}</option></select>
    <Chevron size={12} />
  </Select>
);

const Head = ({ on }: { on: string }) => (
  <>
    <DialogHead>
      <h3>T3 MACD BB</h3>
      <button aria-label="Close"><Icon n="close" /></button>
    </DialogHead>
    <Tabs role="tablist">
      {["Inputs", "Style", "Visibility"].map((t) => (
        <DialogTab key={t} role="tab" aria-selected={t === on} $on={t === on}>{t}</DialogTab>
      ))}
    </Tabs>
  </>
);

const Foot = () => (
  <Footer>
    <Pick label="Presets">Defaults</Pick>
    <Spacer />
    <Button>Cancel</Button>
    <Button $solid>Ok</Button>
  </Footer>
);

const StyleDialog = () => (
  <Dialog $x={542} $y={126} $w={380} $end={20} $foot={16} $r="6px" role="dialog" aria-label="Style settings">
    <Head on="Style" />
    <Form>
      <Row><Tick>Upper Band</Tick><FieldStyle label="Upper Band" c="#535353" icon="wave" /></Row>
      <Row $gap={16}><Tick>Lower Band</Tick><FieldStyle label="Lower Band" c="#535353" icon="wave" /></Row>
      {["dots", "wave"].map((icon, i) => (
        <React.Fragment key={icon}>
          <Row $gap={i ? 20 : 16} $h={18}><Tick>Plot</Tick></Row>
          <Row $gap={12}><Indented>Color 0</Indented><FieldStyle label="Color 0" c="#04ac1f" thick icon={icon} /></Row>
          <Row $gap={8}><Indented>Color 1</Indented><FieldStyle label="Color 1" c="#a80e0e" thick /></Row>
        </React.Fragment>
      ))}
      <Row $gap={20}><Tick>Zeroline</Tick><FieldStyle label="Zeroline" c="#a85614" icon="wave" /></Row>
      <Row $gap={16}><Tick>Fill</Tick><FieldStyle label="Fill" c="#11003d" only /></Row>
      <Section>OUTPUTS</Section>
      <Row $gap={16}><span>Precision</span><Pick label="Precision">Default</Pick></Row>
      <Row $gap={16} $h={18}><Tick>Labels on price scale</Tick></Row>
      <Row $gap={16} $h={18}><Tick>Values in status line</Tick></Row>
    </Form>
    <Foot />
  </Dialog>
);

const inputs: [string, string][] = [["BB Periods", "10"], ["Deviations", "1"], ["FastLength", "12"], ["SlowLength", "26"], ["SignalLength", "9"]];

const InputsDialog = () => (
  <Dialog $x={947} $y={148} $w={378} $end={18} $foot={10} $r="4px 0 0 0" role="dialog" aria-label="Input settings">
    <Head on="Inputs" />
    <Form>
      {inputs.map(([l, v], i) => (
        <Row key={l} $gap={i ? 16 : 0} $col={100}>
          <label htmlFor={l}>{l}</label>
          <NumberBox id={l} defaultValue={v} />
        </Row>
      ))}
    </Form>
    <Foot />
  </Dialog>
);

const leftGroups = [
  ["trend", "fib", "pattern", "forecast", "brush", "text", "emoji"],
  ["ruler", "zoom"],
  ["magnet", "pencilLock", "lock", "eyeWave"],
];

const rangeItems: [string, number][] = [["1D", 28], ["5D", 28], ["1M", 30], ["3M", 29], ["6M", 29], ["YTD", 38], ["1Y", 27], ["5Y", 28], ["All", 27]];

export default function App() {
  return (
    <Page>
      <Global />
      <Titlebar>
        <Tab>
          <Coin>100</Coin>
          <Quote>NQ1! <Triangle /> 20,512.75 <Up>+0.56%</Up> /</Quote>
          <button aria-label="Close tab"><Icon n="close" size={16} /></button>
        </Tab>
        <Tab $active>
          <EthLogo size={19} />
          <Quote>ETHUSD <Triangle /> 2,191.86 <Up>+0.96%</Up></Quote>
          <button aria-label="Close tab"><Icon n="close" size={16} /></button>
        </Tab>
        <NewTab aria-label="New tab">
          <Svg width="13" height="13" stroke="currentColor"><path d="M6.5 0v13M0 6.5h13" /></Svg>
        </NewTab>
        <WindowButtons>
          <WinButton $w={28} $dim aria-label="Screens"><Icon n="screens" /></WinButton>
          <Divider $ml={13} $mr={12} $c="#5c5e69" />
          <WinButton $w={28} $mr={10} $dim aria-label="More"><Icon n="more" size={22} /></WinButton>
          <WinButton $w={50} aria-label="Minimize"><Icon n="min" /></WinButton>
          <WinButton $w={50} aria-label="Restore"><Icon n="restore" /></WinButton>
          <WinButton $w={50} aria-label="Close window"><Icon n="close" size={18} /></WinButton>
        </WindowButtons>
      </Titlebar>

      <Toolbar>
        <Avatar aria-label="Account">NEXUS<Badge $top={-3} $right={-10}>4</Badge></Avatar>
        <Tool $w={76} $ml={19} $bold><Icon n="search" size={20} />ETHUSD</Tool>
        <Tool $w={28} $ml={21} aria-label="Compare"><Icon n="plus" /></Tool>
        <Divider $ml={10} $mr={13} />
        <Tool $w={27}>1T</Tool>
        <Tool $w={39} $blue>15m</Tool>
        <Tool $w={10} aria-label="Intervals"><Chevron /></Tool>
        <Divider $ml={9} $mr={9} />
        <Tool $w={28} aria-label="Chart type"><Icon n="candles" /></Tool>
        <Divider $ml={9} $mr={9} />
        <Tool $w={100}><Icon n="indicators" />Indicators</Tool>
        <Tool $w={10} $ml={7} aria-label="Favorite indicators"><Chevron /></Tool>
        <Tool $w={28} $ml={10} aria-label="Templates"><Icon n="grid" /></Tool>
        <Letter $ml={8}>L</Letter><Letter>M</Letter><Letter>F</Letter><Letter>E</Letter>
        <Divider $ml={13} $mr={10} />
        <Tool $w={72}><Icon n="alert" />Alert</Tool>
        <Tool $w={80} $ml={4}><Icon n="replay" />Replay</Tool>
        <Divider $ml={5} $mr={9} />
        <Tool $w={28} aria-label="Undo"><Icon n="undo" /></Tool>
        <Tool $w={28} $ml={10} $dim aria-label="Redo"><Icon n="redo" /></Tool>
        <RightTools>
          <Tool $w={28} aria-label="Layout"><Icon n="square" /></Tool>
          <LayoutName>Unnamed<small>Save</small></LayoutName>
          <Chevron />
          <Letter $ml={8}>B</Letter><Letter>E</Letter><Letter>N</Letter>
          <Divider $ml={13} $mr={10} />
          <Tool $w={28} aria-label="Quick search"><Icon n="quick" /></Tool>
          <Tool $w={28} $ml={10} aria-label="Settings"><Icon n="hex" /></Tool>
          <Tool $w={28} $ml={10} aria-label="Fullscreen"><Icon n="full" /></Tool>
          <Tool $w={28} $ml={9} aria-label="Snapshot"><Icon n="camera" /></Tool>
          <Publish>Publish</Publish>
        </RightTools>
      </Toolbar>

      <FloatingBar>
        <Grip />
        {["fib", "rect", "text", "ellipse", "cursor", "fork", "trend", "cross", "up", "down", "ray"].map((n) => (
          <FloatButton key={n} $blue={n === "cross"} aria-label={n}><Icon n={n} /></FloatButton>
        ))}
      </FloatingBar>

      <Body>
        <Side>
          <SideButton $h={36} $blue aria-label="cross"><Icon n="cross" /></SideButton>
          {leftGroups.map((g, i) => (
            <React.Fragment key={i}>
              {i > 0 && <Rule />}
              {g.map((n) => <SideButton key={n} $h={36} aria-label={n}><Icon n={n} /></SideButton>)}
            </React.Fragment>
          ))}
          <BlueButton aria-label="Sync"><Icon n="globe" /></BlueButton>
          <Rule />
          <SideButton $h={36} aria-label="Remove"><Icon n="trash" /></SideButton>
          <Spacer />
          <BlueButton aria-label="Favorites"><Icon n="star" /></BlueButton>
        </Side>

        <Main>
          <ChartFrame>
            <Plot>
              <Chart />
              <Legend>
                <EthLogo />
                <SymbolName>Ethereum / U.S. Dollar · 15 · COINBASE</SymbolName>
                <Ohlc>O<b>2,188.87</b></Ohlc>
                <Ohlc>H<b>2,193.22</b></Ohlc>
                <Ohlc>L<b>2,183.34</b></Ohlc>
                <Ohlc>C<b>2,191.86</b></Ohlc>
                <Ohlc><b>+2.77 (+0.13%)</b></Ohlc>
              </Legend>
              <Orders>
                <OrderButton $c="#f23645">2,191.54<small>SELL</small></OrderButton>
                <Spread>0.20</Spread>
                <OrderButton $c="#4c55f5">2,191.74<small>BUY</small></OrderButton>
              </Orders>
              <StudyRow>
                <Study>
                  <span>T3 MACD BB 10 1 12 26 9</span>
                  {["eye", "hexSmall", "braces", "trashBold", "more"].map((n) => (
                    <button key={n} aria-label={n}><Icon n={n} size={20} /></button>
                  ))}
                </Study>
                <Value $c="#00dc28" $ml={-4}>70</Value>
                <Value $c="#e07a1c" $ml={6}>0.00</Value>
              </StudyRow>
            </Plot>
            <PriceScale>
              <svg width="100%" height="100%">
                <g transform="translate(-1806 -81)">
                  {[...prices, ...levels].map((p) => <AxisText key={p.t} x="1814" y={p.y + 4}>{p.t}</AxisText>)}
                  <path d="M1806 498.5h66" stroke="#e0e3eb" />
                  <rect x="1806" y="231" width="60" height="17" rx="1" fill="#4caf50" />
                  <AxisText $tag x="1814" y="243">2,191.86</AxisText>
                </g>
              </svg>
              <Currency>
                <select aria-label="Currency"><option>USD</option></select>
                <Chevron size={7} />
              </Currency>
            </PriceScale>
            <TimeScale>
              <svg width="100%" height="27">
                {hours.map((h, i) => <AxisText key={i} $strong={h.length === 1} x={hourX(i) - 56} y="17" textAnchor="middle">{h}</AxisText>)}
              </svg>
            </TimeScale>
            <ScaleCorner aria-label="Scale settings"><Icon n="hexSmall" size={20} /></ScaleCorner>
          </ChartFrame>
          <RangeBar>
            {rangeItems.map(([t, w]) => <Range key={t} $w={w}>{t}</Range>)}
            <Divider $ml={6} $mr={8} />
            <button aria-label="Go to date"><Icon n="goTo" size={26} /></button>
            <Clock>13:22:29 UTC-5</Clock>
          </RangeBar>
          <BottomTabs>
            <BottomTab $w={139}>Stock Screener<Chevron /></BottomTab>
            <BottomTab $w={100}>Pine Editor</BottomTab>
            <BottomTab $w={127}>Strategy Tester</BottomTab>
            <BottomTab $w={123}>Replay Trading</BottomTab>
            <BottomTab $w={90}>Trading Panel</BottomTab>
            <Spacer />
            <Tool $w={28} aria-label="Expand panel"><Icon n="chevUp" /></Tool>
            <Tool $w={28} $ml={8} aria-label="Maximize panel"><Icon n="panel" /></Tool>
          </BottomTabs>
        </Main>

        <Side $right>
          <SideButton $h={46} aria-label="Watchlist"><Icon n="watch" /></SideButton>
          <SideButton $h={46} aria-label="Alerts"><Icon n="alarm" size={25} /><Badge $top={3} $right={-1}>1</Badge></SideButton>
          <SideButton $h={46} aria-label="Object tree"><Icon n="layers" /></SideButton>
          <SideButton $h={46} aria-label="Chats"><Icon n="chat" /></SideButton>
          <Spacer />
          <SideButton $h={46} aria-label="Screeners"><Icon n="radar" /></SideButton>
          <SideButton $h={46} aria-label="Calendars"><Icon n="calendar" /></SideButton>
          <SideButton $h={46} aria-label="Depth of market"><Icon n="dom" /></SideButton>
          <Rule />
          <SideButton $h={46} aria-label="Streams"><Icon n="rss" /><Badge $top={3} $right={-1}>3</Badge></SideButton>
          <SideButton $h={46} aria-label="Notifications"><Icon n="bell" /><Badge $top={3} $right={-1}>4</Badge></SideButton>
          <SideButton $h={46} aria-label="Help"><Icon n="help" /></SideButton>
        </Side>
      </Body>

      <StyleDialog />
      <InputsDialog />

      <Callout $x={86} $y={201} $w={343} $h={276}>
        <p>{"bands dots and line\ncolors, sizes and\nstyles"}</p>
        <Arrow $top={66} width="98" height="38"><path d="M0 13h64V2l32 16.5L64 35V24H0z" fill="#fff" /></Arrow>
      </Callout>
      <Callout $x={1413} $y={328} $w={401} $h={178}>
        <p>{"regular bollinger band\nand  macd settings you\ncan change"}</p>
        <Arrow $left $top={62} width="220" height="40"><path d="M220 14H34V3L1 19.5 34 36V25h186z" fill="#fff" /></Arrow>
      </Callout>
    </Page>
  );
}
